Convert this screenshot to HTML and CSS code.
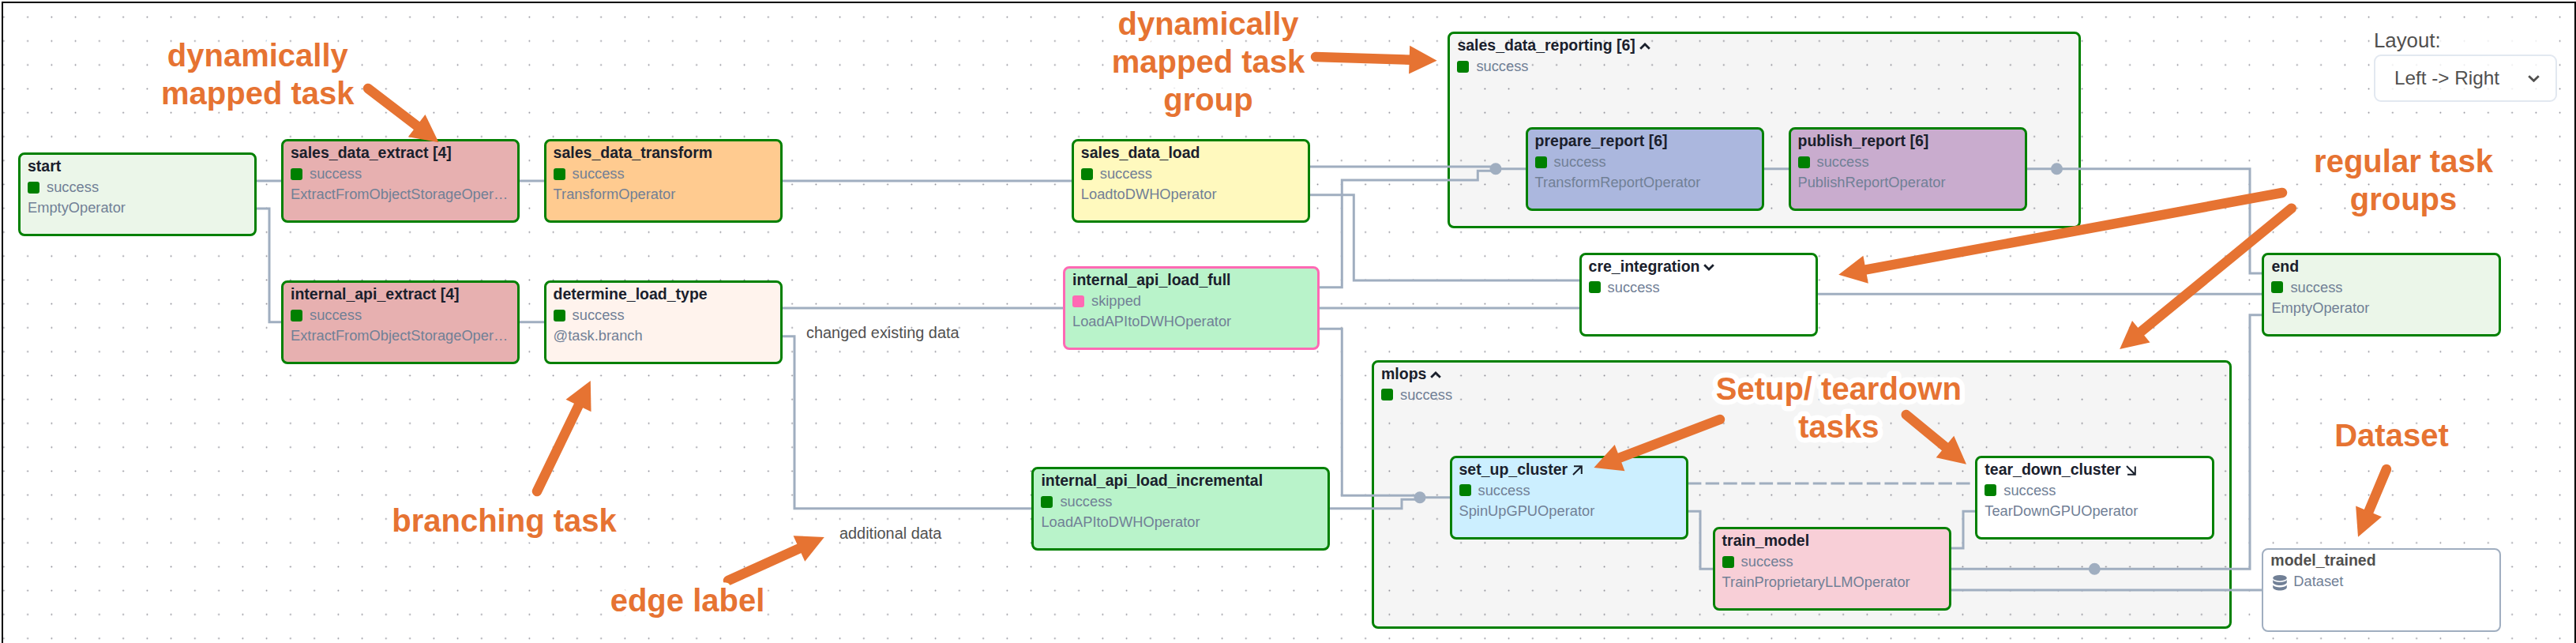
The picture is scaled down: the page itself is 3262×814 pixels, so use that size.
FILE: index.html
```html
<!DOCTYPE html>
<html lang="en">
<head>
<meta charset="utf-8">
<title>DAG graph</title>
<link rel="stylesheet" href="styles.css">
</head>
<body>
<main class="canvas">
  <svg class="layer" width="3262" height="814" aria-hidden="true">
    <defs>
      <pattern id="dots" x="-10.25" y="6.55" width="30.25" height="30.25" patternUnits="userSpaceOnUse">
        <circle cx="15.12" cy="15.12" r="0.9" fill="#81818a"/>
      </pattern>
    </defs>
    <rect x="4" y="4" width="3256" height="810" fill="url(#dots)"/>
  </svg>

  <section class="node group reporting">
    <h3 class="name">sales_data_reporting [6]<svg class="chev" viewBox="0 0 14 9"><path d="M1.2 7.8 7 2l5.8 5.8"/></svg></h3>
    <p class="state"><i class="swatch"></i>success</p>
  </section>
  <section class="node group mlops">
    <h3 class="name">mlops<svg class="chev" viewBox="0 0 14 9"><path d="M1.2 7.8 7 2l5.8 5.8"/></svg></h3>
    <p class="state"><i class="swatch"></i>success</p>
  </section>

  <svg class="layer edges" width="3262" height="814" aria-hidden="true">
    <path d="M324 229H357M324 264H341V407.7H357M657 229H690M657 407.7H690M990 229H1358"/>
    <path d="M990 390H1347M990 425.7H1006V643.7H1307"/>
    <path d="M1658 211H1894M1658 246.7H1714.3V355H2001M1670 363.7H1699.3V228H1871.3V216.3H1890M1670 390H2001"/>
    <path d="M1670 416.3H1699.3V627.3H1798M1683 643.7H1775V632.3H1794M1798 629.7H1837"/>
    <path d="M1894 213.7H1933M2233 213.7H2266M2566 213.7H2849V346H2866M2301 372.3H2866"/>
    <path d="M2137 647.3H2153V720.3H2170M2470 694H2486V647.3H2503M2470 720.3H2849V398.7H2866M2470 747H2866"/>
    <path d="M2137 612H2499" stroke-dasharray="17.4 5.28"/>
    <circle cx="1894" cy="213.7" r="7.5"/>
    <circle cx="2604.5" cy="213.7" r="7.5"/>
    <circle cx="1798" cy="629.7" r="7.5"/>
    <circle cx="2652.3" cy="720.3" r="7.5"/>
  </svg>

  <article class="node start"><h3 class="name">start</h3><p class="state"><i class="swatch"></i>success</p><p class="op">EmptyOperator</p></article>
  <article class="node sales-extract"><h3 class="name">sales_data_extract [4]</h3><p class="state"><i class="swatch"></i>success</p><p class="op">ExtractFromObjectStorageOper…</p></article>
  <article class="node api-extract"><h3 class="name">internal_api_extract [4]</h3><p class="state"><i class="swatch"></i>success</p><p class="op">ExtractFromObjectStorageOper…</p></article>
  <article class="node transform"><h3 class="name">sales_data_transform</h3><p class="state"><i class="swatch"></i>success</p><p class="op">TransformOperator</p></article>
  <article class="node branch"><h3 class="name">determine_load_type</h3><p class="state"><i class="swatch"></i>success</p><p class="op">@task.branch</p></article>
  <article class="node sales-load"><h3 class="name">sales_data_load</h3><p class="state"><i class="swatch"></i>success</p><p class="op">LoadtoDWHOperator</p></article>
  <article class="node load-full skipped"><h3 class="name">internal_api_load_full</h3><p class="state"><i class="swatch"></i>skipped</p><p class="op">LoadAPItoDWHOperator</p></article>
  <article class="node load-incremental"><h3 class="name">internal_api_load_incremental</h3><p class="state"><i class="swatch"></i>success</p><p class="op">LoadAPItoDWHOperator</p></article>
  <article class="node prepare"><h3 class="name">prepare_report [6]</h3><p class="state"><i class="swatch"></i>success</p><p class="op">TransformReportOperator</p></article>
  <article class="node publish"><h3 class="name">publish_report [6]</h3><p class="state"><i class="swatch"></i>success</p><p class="op">PublishReportOperator</p></article>
  <article class="node cre"><h3 class="name">cre_integration<svg class="chev" viewBox="0 0 14 9"><path d="M1.2 1.2 7 7l5.8-5.8"/></svg></h3><p class="state"><i class="swatch"></i>success</p></article>
  <article class="node setup"><h3 class="name">set_up_cluster<svg class="dir" viewBox="0 0 13 13"><path d="M1 12 11.500 1.500M2 1.200H11.800V11"/></svg></h3><p class="state"><i class="swatch"></i>success</p><p class="op">SpinUpGPUOperator</p></article>
  <article class="node train"><h3 class="name">train_model</h3><p class="state"><i class="swatch"></i>success</p><p class="op">TrainProprietaryLLMOperator</p></article>
  <article class="node teardown"><h3 class="name">tear_down_cluster<svg class="dir" viewBox="0 0 13 13"><path d="M1 1 11.500 11.500M2 11.800H11.800V1.500"/></svg></h3><p class="state"><i class="swatch"></i>success</p><p class="op">TearDownGPUOperator</p></article>
  <article class="node end"><h3 class="name">end</h3><p class="state"><i class="swatch"></i>success</p><p class="op">EmptyOperator</p></article>
  <article class="node dataset"><h3 class="name">model_trained</h3><p class="state"><svg class="db" viewBox="0 0 18 20"><ellipse cx="9" cy="3.7" rx="8.8" ry="3.7"/><path d="M.2 6.3C2 8.2 5 9 9 9s7-.8 8.8-2.7V9.500C17 11.600 13.500 13 9 13S1 11.600.2 9.500ZM.2 12.700C2 14.600 5 15.400 9 15.400s7-.8 8.800-2.700V15.900C17 18 13.500 19.400 9 19.400S1 18 .2 15.900Z"/></svg>Dataset</p></article>

  <span class="edge-label changed">changed existing data</span>
  <span class="edge-label additional">additional data</span>

  <svg class="layer notes" width="3262" height="814">
    <g id="arrows"></g>
    <text x="326.3" y="83.5">dynamically</text><text x="326.3" y="131.7">mapped task</text>
    <text x="1530" y="43.7">dynamically</text><text x="1530" y="92">mapped task</text><text x="1530" y="139.7">group</text>
    <text x="638.5" y="672.5">branching task</text>
    <text x="870.5" y="773.7">edge label</text>
    <text x="2328.3" y="506">Setup/ teardown</text><text x="2328.3" y="554">tasks</text>
    <text x="3043.5" y="217.7">regular task</text><text x="3043.5" y="266">groups</text>
    <text x="3028.5" y="564.7">Dataset</text>
  </svg>

  <aside class="panel">
    <label class="panel-label">Layout:</label>
    <div class="select"><span>Left -&gt; Right</span><svg class="caret" viewBox="0 0 15 9"><path d="M1.2 1.2 7.5 7.3 13.8 1.2"/></svg></div>
  </aside>
</main>
<script src="arrows.js"></script>
</body>
</html>
```

FILE: arrows.js
```js
// Callout arrows: [tail x, tail y, tip x, tip y]
const arrows = [
  [466, 112, 555.5, 180.3],
  [1666, 72, 1819.6, 76.7],
  [680, 622, 747.8, 482],
  [922, 735, 1043.8, 680],
  [2178, 531, 2018.4, 592],
  [2413.7, 525, 2490, 587.7],
  [2890, 244, 2328.2, 347.7],
  [2901.8, 263.7, 2684.2, 442],
  [3022, 594, 2986, 679.7],
];
const HEAD = 35, HALF = 17.8;
document.getElementById('arrows').innerHTML = arrows.map(([x, y, tx, ty]) => {
  const len = Math.hypot(tx - x, ty - y), ux = (tx - x) / len, uy = (ty - y) / len;
  const bx = tx - ux * HEAD, by = ty - uy * HEAD;
  return `<path class="shaft" d="M${x} ${y}L${bx + ux} ${by + uy}"/>` +
    `<path class="tip" d="M${tx} ${ty}L${bx - uy * HALF} ${by + ux * HALF}L${bx + uy * HALF} ${by - ux * HALF}Z"/>`;
}).join('');
```

FILE: styles.css
```css
body { margin: 0; background: #fff; font-family: "Liberation Sans", Arial, sans-serif; }
h3, p { margin: 0; }

.canvas { position: relative; width: 3262px; height: 814px; overflow: hidden; }
.canvas::before { content: ""; position: absolute; left: 2px; top: 2px; right: 0; bottom: 0; border: solid #000; border-width: 2px 2px 0 2px; }
.layer { position: absolute; left: 0; top: 0; }

.edges path { fill: none; stroke: #a0aec0; stroke-width: 3; }
.edges circle { fill: #a0aec0; }

.node { position: absolute; box-sizing: border-box; width: 302.4px; height: 106px; border: 3px solid #008000; border-radius: 8px; padding: 1px 9px; background: #fff; color: #1a202c; white-space: nowrap; }
.name { height: 27px; line-height: 27px; font-size: 19.5px; font-weight: 700; }
.state, .op { height: 26px; line-height: 26px; font-size: 18.3px; color: #718096; }
.state { display: flex; align-items: center; }
.swatch { width: 15px; height: 15px; margin-right: 9px; border-radius: 3px; background: #008000; }
.chev { width: 14px; height: 9px; margin-left: 5px; fill: none; stroke: currentColor; stroke-width: 2.8; vertical-align: 1px; }
.dir { width: 13px; height: 13px; margin-left: 6px; fill: none; stroke: currentColor; stroke-width: 2; vertical-align: -1px; }
.db { width: 18px; height: 20px; margin: 3px 8px 0 3px; fill: #718096; }

.start { left: 23px; top: 193.3px; background: #ebf6e9; }
.sales-extract { left: 356px; top: 176px; background: #e7b0b0; }
.api-extract { left: 356px; top: 355px; background: #e7b0b0; }
.transform { left: 688.6px; top: 176px; background: #ffcb90; }
.branch { left: 688.6px; top: 355px; background: #fff3ed; }
.sales-load { left: 1356.8px; top: 176px; background: #fff9be; }
.load-full { left: 1346px; top: 337.3px; width: 325.4px; background: #b9f3ca; }
.load-incremental { left: 1306.4px; top: 591px; width: 378px; background: #b9f3ca; }
.prepare { left: 1931.6px; top: 161px; background: #abb7de; }
.publish { left: 2264.5px; top: 161px; background: #c9acce; }
.cre { left: 1999.6px; top: 319.7px; }
.setup { left: 1835.5px; top: 576.7px; background: #ccefff; }
.train { left: 2168.6px; top: 667.3px; background: #f8cfd7; }
.teardown { left: 2501.3px; top: 576.7px; }
.end { left: 2864.4px; top: 319.7px; background: #ebf6e9; }
.dataset { left: 2864.3px; top: 694px; border: 2px solid #a0aec0; padding: 0 9px; color: #51504f; }
.group { background: rgba(0, 0, 0, .04); }
.reporting { left: 1833.4px; top: 40px; width: 801.5px; height: 249px; }
.mlops { left: 1737px; top: 455.7px; width: 1089.4px; height: 340.5px; }
.skipped { border-color: #ff69b4; }
.skipped .swatch { background: #ff69b4; }

.edge-label { position: absolute; line-height: 30px; font-size: 19.9px; color: #51504f; white-space: nowrap; }
.changed { left: 1021px; top: 406px; }
.additional { left: 1063px; top: 660px; }

.notes text { font-size: 40px; font-weight: 700; text-anchor: middle; fill: #e67332; stroke: #fff; stroke-width: 13px; stroke-linejoin: round; paint-order: stroke; }
.shaft { stroke: #e67332; stroke-width: 12.5px; stroke-linecap: round; }
.tip { fill: #e67332; }

.panel { position: absolute; left: 3006px; top: 33px; width: 232px; background: rgba(255, 255, 255, .8); color: #51504f; }
.panel-label { display: block; height: 36px; line-height: 36px; font-size: 25.8px; }
.select { box-sizing: border-box; display: flex; align-items: center; justify-content: space-between; height: 60px; border: 2px solid #e2e8f0; border-radius: 9px; padding: 0 20px 0 24px; font-size: 24.3px; }
.caret { width: 15px; height: 9px; fill: none; stroke: currentColor; stroke-width: 2.8; }
```
